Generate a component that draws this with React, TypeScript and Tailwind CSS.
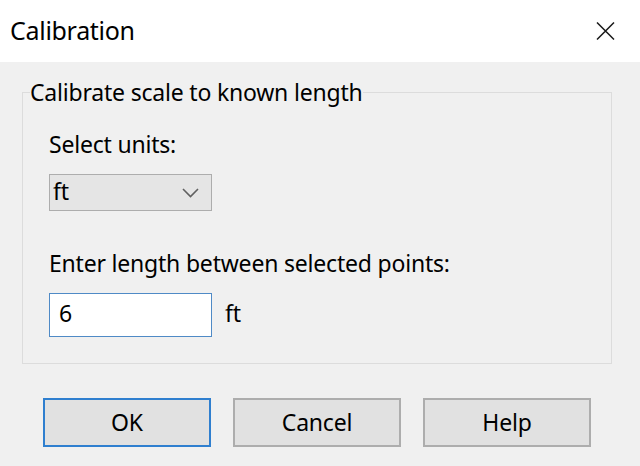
import React from 'react'

const font = { fontFamily: '"Noto Sans", "Open Sans", Arial, sans-serif' }

function CloseIcon() {
  return (
    <svg width="19" height="18" viewBox="0 0 19 18" className="block">
      <path d="M1 0.5 L18 17.5 M18 0.5 L1 17.5" stroke="#1a1a1a" strokeWidth="1.5" fill="none" />
    </svg>
  )
}

function Chevron() {
  return (
    <svg width="17" height="10" viewBox="0 0 17 10" className="block">
      <path d="M1 1 L8.5 8.5 L16 1" stroke="#606060" strokeWidth="1.6" fill="none" />
    </svg>
  )
}

function DialogButton({ label, primary }: { label: string; primary?: boolean }) {
  return (
    <button
      className={
        'w-[168px] h-[49px] bg-[#e1e1e1] text-[23px] tracking-[-0.2px] text-black leading-none ' +
        (primary ? 'border-2 border-[#2f7fcf]' : 'border-2 border-[#adadad]')
      }
    >
      {label}
    </button>
  )
}

export default function App() {
  return (
    <div className="w-[640px] h-[466px] bg-[#f0f0f0] text-black flex flex-col overflow-hidden" style={font}>
      <div className="h-[62px] bg-white flex items-center justify-between pl-[10px] pr-[25px]">
        <span className="text-[25px] tracking-[-0.3px] leading-none pb-[2px]">Calibration</span>
        <CloseIcon />
      </div>

      <fieldset className="ml-[22px] mt-[18px] w-[590px] h-[284px] border border-[#dcdcdc] pl-[26px] text-[23px] tracking-[-0.2px]">
        <legend className="ml-[-19px] px-0 leading-[24px]">Calibrate scale to known length</legend>
        <div className="leading-[24px] mt-[28px]">Select units:</div>
        <div className="mt-[18px] w-[163px] h-[37px] bg-[#e5e5e5] border border-[#adadad] flex items-center justify-between pl-[3px] pr-[12px]">
          <span className="leading-none pb-[3px]">ft</span>
          <Chevron />
        </div>
        <div className="leading-[24px] mt-[40px]">Enter length between selected points:</div>
        <div className="mt-[18px] flex items-center gap-[13px]">
          <div className="w-[163px] h-[44px] bg-white border border-[#4f8ac6] flex items-center pl-[9px]">
            <span className="leading-none pb-[3px]">6</span>
          </div>
          <span className="leading-none pb-[3px]">ft</span>
        </div>
      </fieldset>

      <div className="mt-[34px] pl-[43px] flex gap-[22px]">
        <DialogButton label="OK" primary />
        <DialogButton label="Cancel" />
        <DialogButton label="Help" />
      </div>
    </div>
  )
}
